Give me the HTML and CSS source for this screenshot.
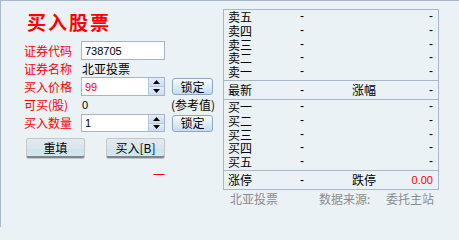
FILE: index.html
```html
<!DOCTYPE html>
<html lang="zh-CN">
<head>
<meta charset="utf-8">
<title>买入股票</title>
<link rel="stylesheet" href="styles.css">
</head>
<body>
<div class="page">
  <div class="left">
    <h1 class="title">买入股票</h1>
    <div class="form">
      <span class="label">证券代码</span>
      <div class="input"><span class="num">738705</span></div>
      <span></span>

      <span class="label">证券名称</span>
      <span class="value">北亚投票</span>
      <span></span>

      <span class="label">买入价格</span>
      <div class="input"><span class="num red">99</span>
        <span class="spin">
          <span class="spin-btn"><svg width="7" height="4" viewBox="0 0 7 4"><path d="M3.5 0 L7 4 L0 4 Z" fill="#000"/></svg></span>
          <span class="spin-btn"><svg width="7" height="4" viewBox="0 0 7 4"><path d="M0 0 L7 0 L3.5 4 Z" fill="#000"/></svg></span>
        </span>
      </div>
      <button class="lock">锁定</button>

      <span class="label">可买(股)</span>
      <span class="value num">0</span>
      <span class="ref">(参考值)</span>

      <span class="label">买入数量</span>
      <div class="input short"><span class="num">1</span>
        <span class="spin">
          <span class="spin-btn"><svg width="7" height="4" viewBox="0 0 7 4"><path d="M3.5 0 L7 4 L0 4 Z" fill="#000"/></svg></span>
          <span class="spin-btn"><svg width="7" height="4" viewBox="0 0 7 4"><path d="M0 0 L7 0 L3.5 4 Z" fill="#000"/></svg></span>
        </span>
      </div>
      <button class="lock">锁定</button>
    </div>
    <div class="actions">
      <button class="act">重填</button>
      <button class="act">买入[B]</button>
    </div>
    <div class="status">一</div>
  </div>

  <div class="right">
    <div class="quote">
      <div class="sec">
        <div class="row"><span>卖五</span><span class="d">-</span><span></span><span class="d r">-</span></div>
        <div class="row"><span>卖四</span><span class="d">-</span><span></span><span class="d r">-</span></div>
        <div class="row"><span>卖三</span><span class="d">-</span><span></span><span class="d r">-</span></div>
        <div class="row"><span>卖二</span><span class="d">-</span><span></span><span class="d r">-</span></div>
        <div class="row"><span>卖一</span><span class="d">-</span><span></span><span class="d r">-</span></div>
      </div>
      <div class="mid">
        <div class="row tall"><span>最新</span><span class="d">-</span><span>涨幅</span><span class="d r">-</span></div>
      </div>
      <div class="sec">
        <div class="row"><span>买一</span><span class="d">-</span><span></span><span class="d r">-</span></div>
        <div class="row"><span>买二</span><span class="d">-</span><span></span><span class="d r">-</span></div>
        <div class="row"><span>买三</span><span class="d">-</span><span></span><span class="d r">-</span></div>
        <div class="row"><span>买四</span><span class="d">-</span><span></span><span class="d r">-</span></div>
        <div class="row"><span>买五</span><span class="d">-</span><span></span><span class="d r">-</span></div>
      </div>
      <div class="bot">
        <div class="row tall"><span>涨停</span><span class="d">-</span><span>跌停</span><span class="num red r">0.00</span></div>
      </div>
    </div>
    <div class="footer">
      <span class="f-name">北亚投票</span>
      <span class="f-src">数据来源:</span>
      <span class="f-site">委托主站</span>
    </div>
  </div>
</div>
</body>
</html>
```

FILE: styles.css
```css
* { box-sizing: border-box; }
html, body { margin: 0; padding: 0; }
body {
  width: 459px;
  height: 227px;
  overflow: hidden;
  background: #ebf2f5;
  font-family: "Noto Sans CJK SC", "Liberation Sans", sans-serif;
  font-size: 12px;
  color: #000;
}
.page {
  width: 459px;
  height: 227px;
  border-top: 1px solid #a9b9cc;
  border-left: 1px solid #a9b9cc;
  display: flex;
}
.left {
  width: 222px;
  padding-left: 23px;
  padding-top: 9px;
}
.title {
  margin: 0 0 0 3px;
  height: 24px;
  line-height: 24px;
  font-size: 19px;
  font-weight: 700;
  color: #ff0000;
  letter-spacing: 2px;
}
.form {
  margin-top: 7px;
  display: grid;
  grid-template-columns: 57px 91px 45px;
  grid-template-rows: 19px 17px 19px 18px 18px;
  align-items: center;
}
.label {
  color: #ff0000;
  line-height: 14px;
  white-space: nowrap;
}
.value { line-height: 14px; padding-left: 1px; }
.num {
  font-family: "Liberation Sans", sans-serif;
  font-size: 11px;
}
.red { color: #ff0000; }
.input {
  height: 19px;
  width: 84px;
  border: 1px solid #a5b5c9;
  background: #fff;
  display: flex;
  align-items: center;
  padding-left: 3px;
}
.input.short { height: 18px; }
.spin {
  margin-left: auto;
  width: 16px;
  height: 100%;
  display: flex;
  flex-direction: column;
  border-left: 1px solid #b8c8dc;
}
.spin-btn {
  flex: 1;
  display: flex;
  align-items: center;
  justify-content: center;
  background: linear-gradient(#e4edf9, #cddcf0);
}
.spin-btn + .spin-btn { border-top: 1px solid #b8c8dc; }
.lock {
  width: 41px;
  height: 17px;
  padding: 0;
  border: 1px solid #8ea6c4;
  border-radius: 3px;
  background: linear-gradient(#f6fbff, #dcebfa 55%, #c4dcf5);
  font: inherit;
  line-height: 14px;
  color: #000;
}
.ref { line-height: 14px; margin-left: -1px; white-space: nowrap; }
.actions {
  margin-top: 6px;
  display: flex;
  gap: 21px;
  padding-left: 2px;
}
.act {
  width: 59px;
  height: 21px;
  padding: 0 0 2px;
  border: 1px solid #c6c6c6;
  border-radius: 2px;
  background: linear-gradient(#e2e9f0 0, #dbe5ed 50%, #cbe5eb 55%, #d3e9ef 100%);
  box-shadow: inset 0 -2px 0 #7c868c;
  font: inherit;
  line-height: 14px;
  color: #000;
}
.status {
  margin-top: 8px;
  width: 141px;
  text-align: right;
  line-height: 15px;
  color: #ff0000;
}
.right {
  padding-top: 8px;
}
.quote {
  width: 216px;
  border: 1px solid #a9b7ca;
}
.sec {
  height: 71px;
  border-bottom: 1px solid #a9b7ca;
}
.mid { height: 19px; border-bottom: 1px solid #a9b7ca; }
.bot { height: 18px; }
.row {
  display: grid;
  grid-template-columns: 72px 52px 1fr auto;
  padding: 0 5px 0 4px;
  height: 13.8px;
  line-height: 13.8px;
}
.row.tall { height: 18px; line-height: 18px; }
.d { font-family: "Liberation Sans", sans-serif; }
.r { text-align: right; }
.footer {
  margin-top: 1px;
  width: 216px;
  display: flex;
  line-height: 15px;
  color: #8c8c8c;
  padding: 0 5px 0 7px;
}
.f-src { margin-left: auto; width: 67px; }
```
